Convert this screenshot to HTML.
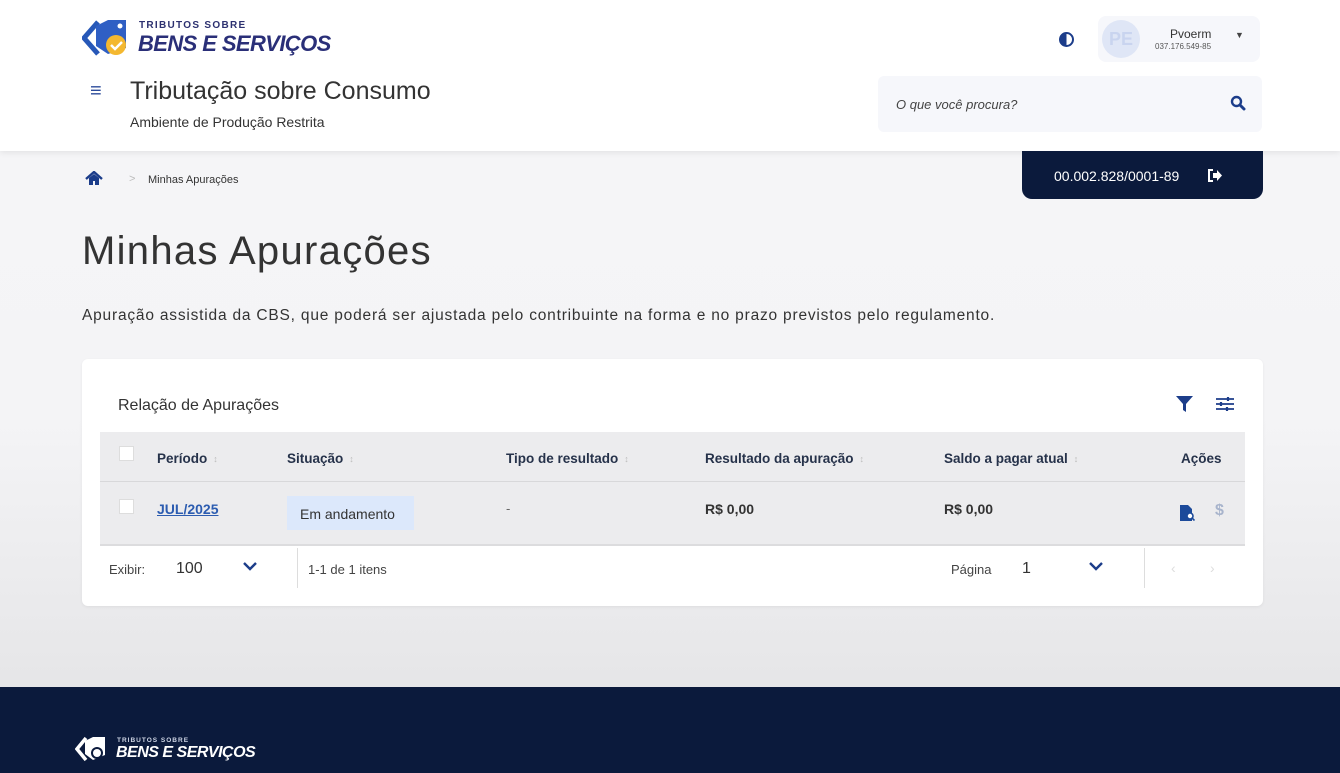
<!DOCTYPE html>
<html><head><meta charset="utf-8"><style>
*{margin:0;padding:0;box-sizing:border-box}
body{width:1340px;height:773px;overflow:hidden;font-family:"Liberation Sans",sans-serif;background:linear-gradient(#f6f6f8 0,#f4f4f6 420px,#e6e6e8 680px);position:relative;color:#222}
.a{position:absolute}
.hdr{left:0;top:0;width:1340px;height:151px;background:#fff;box-shadow:0 2px 6px rgba(0,0,0,.08)}
.foot{left:0;top:687px;width:1340px;height:86px;background:#0b1a3c}
.th{font-size:13.5px;font-weight:bold;color:#26324a;top:451px}
.sort{color:#bbb;font-size:9px;font-weight:normal;margin-left:6px;vertical-align:1px}
.cb{width:15px;height:15px;background:#fff;border:1px solid #ddd}
</style></head><body>
<div class="a hdr"></div>
<svg class="a" style="left:82px;top:18px" width="50" height="40" viewBox="0 0 50 40">
<path d="M16 4 L2 20 L16 36" fill="none" stroke="#2758b8" stroke-width="5" stroke-linejoin="round"/>
<path d="M14 8 L26 2 L44 2 L44 30 L26 36 L14 28 Z" fill="#2f5fc4"/>
<circle cx="38" cy="8" r="2.5" fill="#fff"/>
<circle cx="34" cy="27" r="10" fill="#f4b830"/>
<path d="M29 27 l4 4 l7 -7" fill="none" stroke="#fff" stroke-width="2.5"/>
</svg>
<div class="a" style="left:139px;top:20px;font-size:10px;font-weight:bold;letter-spacing:1.3px;color:#2d3170">TRIBUTOS SOBRE</div>
<div class="a" style="left:138px;top:31px;font-size:22px;font-weight:bold;font-style:italic;color:#2a2f78;letter-spacing:-.6px">BENS E SERVIÇOS</div>
<div class="a" style="left:90px;top:80px;font-size:20px;color:#2b4a9a">≡</div>
<div class="a" style="left:130px;top:77px;font-size:25px;color:#333">Tributação sobre Consumo</div>
<div class="a" style="left:130px;top:114px;font-size:14px;color:#333">Ambiente de Produção Restrita</div>
<div class="a" style="left:1059px;top:32px;width:15px;height:15px;border-radius:50%;border:2px solid #1c3d8a;background:linear-gradient(90deg,#1c3d8a 50%,#fff 50%)"></div>
<div class="a" style="left:1098px;top:16px;width:162px;height:46px;background:#f6f7fb;border-radius:8px"></div>
<div class="a" style="left:1102px;top:20px;width:38px;height:38px;border-radius:50%;background:#dfe6f6;color:#c9d4ef;font-size:18px;font-weight:bold;text-align:center;line-height:38px">PE</div>
<div class="a" style="left:1170px;top:27px;font-size:12px;color:#333">Pvoerm</div>
<div class="a" style="left:1155px;top:42px;font-size:8px;color:#555">037.176.549-85</div>
<div class="a" style="left:1235px;top:30px;font-size:9px;color:#444">▼</div>
<div class="a" style="left:878px;top:76px;width:384px;height:56px;background:#f6f7fb;border-radius:6px"></div>
<div class="a" style="left:896px;top:97px;font-size:13px;font-style:italic;color:#444">O que você procura?</div>
<svg class="a" style="left:1230px;top:95px" width="16" height="16" viewBox="0 0 16 16"><circle cx="6.5" cy="6.5" r="4.5" fill="none" stroke="#1c3d8a" stroke-width="2.4"/><path d="M10 10 L14 14" stroke="#1c3d8a" stroke-width="3" stroke-linecap="round"/></svg>
<div class="a" style="left:1022px;top:151px;width:241px;height:48px;background:#0b1a3c;border-radius:0 0 10px 10px"></div>
<div class="a" style="left:1054px;top:168px;font-size:14px;color:#fff">00.002.828/0001-89</div>
<svg class="a" style="left:1207px;top:169px" width="16" height="13" viewBox="0 0 16 13"><path d="M6 1 H2 V12 H6" fill="none" stroke="#fff" stroke-width="2"/><path d="M6 4 H10 V1 L15 6.5 L10 12 V9 H6 Z" fill="#fff"/></svg>
<svg class="a" style="left:85px;top:171px" width="18" height="15" viewBox="0 0 18 15"><path d="M1 8 L9 1 L17 8" fill="none" stroke="#1c3d8a" stroke-width="2.4"/><path d="M4 7 V14 H8 V10 H10 V14 H14 V7 L9 3 Z" fill="#1c3d8a"/></svg>
<div class="a" style="left:129px;top:173px;font-size:11px;color:#bbb">&gt;</div>
<div class="a" style="left:148px;top:174px;font-size:11px;color:#333">Minhas Apurações</div>
<div class="a" style="left:82px;top:229px;font-size:40px;color:#333;letter-spacing:1.3px">Minhas Apurações</div>
<div class="a" style="left:82px;top:307px;font-size:15.5px;color:#333;letter-spacing:.8px">Apuração assistida da CBS, que poderá ser ajustada pelo contribuinte na forma e no prazo previstos pelo regulamento.</div>
<div class="a" style="left:82px;top:359px;width:1181px;height:247px;background:#fff;border-radius:6px;box-shadow:0 1px 3px rgba(0,0,0,.06)"></div>
<div class="a" style="left:118px;top:397px;font-size:16px;color:#333">Relação de Apurações</div>
<svg class="a" style="left:1176px;top:396px" width="17" height="16" viewBox="0 0 17 16"><path d="M0 0 H17 L10 8 V16 L7 14 V8 Z" fill="#1c3d8a"/></svg>
<svg class="a" style="left:1216px;top:397px" width="18" height="14" viewBox="0 0 18 14" stroke="#1c3d8a" stroke-width="1.8"><path d="M0 2 H18 M0 7 H18 M0 12 H18"/><path d="M12 0 V4 M5 5 V9 M11 10 V14" stroke-width="2.2"/></svg>
<div class="a" style="left:100px;top:432px;width:1145px;height:113px;background:#ececee"></div>
<div class="a" style="left:100px;top:481px;width:1145px;height:1px;background:#d8d8da"></div>
<div class="a" style="left:100px;top:544px;width:1145px;height:2px;background:#dcdcde"></div>
<div class="a cb" style="left:119px;top:446px"></div>
<div class="a cb" style="left:119px;top:499px"></div>
<div class="a th" style="left:157px">Período<span class="sort">↕</span></div>
<div class="a th" style="left:287px">Situação<span class="sort">↕</span></div>
<div class="a th" style="left:506px">Tipo de resultado<span class="sort">↕</span></div>
<div class="a th" style="left:705px">Resultado da apuração<span class="sort">↕</span></div>
<div class="a th" style="left:944px">Saldo a pagar atual<span class="sort">↕</span></div>
<div class="a th" style="left:1181px">Ações</div>
<div class="a" style="left:157px;top:501px;font-size:14px;font-weight:bold;color:#2c5cb0;text-decoration:underline">JUL/2025</div>
<div class="a" style="left:287px;top:496px;width:127px;height:34px;background:#dce8fb"></div>
<div class="a" style="left:300px;top:506px;font-size:14px;color:#333">Em andamento</div>
<div class="a" style="left:506px;top:501px;font-size:13px;color:#666">-</div>
<div class="a" style="left:705px;top:501px;font-size:14px;font-weight:bold;color:#333">R$ 0,00</div>
<div class="a" style="left:944px;top:501px;font-size:14px;font-weight:bold;color:#333">R$ 0,00</div>
<svg class="a" style="left:1180px;top:505px" width="15" height="16" viewBox="0 0 15 16"><path d="M0 0 H8 L12 4 V16 H0 Z" fill="#1c4a9a"/><circle cx="10" cy="11" r="3" fill="#fff" stroke="#1c4a9a" stroke-width="1.6"/><path d="M12 13 L14.5 15.5" stroke="#1c4a9a" stroke-width="1.6"/></svg>
<div class="a" style="left:1215px;top:502px;font-size:16px;font-weight:bold;color:#a8b4cc">$</div>
<div class="a" style="left:109px;top:562px;font-size:13px;color:#444">Exibir:</div>
<div class="a" style="left:176px;top:560px;font-size:16px;color:#333">100</div>
<svg class="a" style="left:243px;top:562px" width="14" height="9" viewBox="0 0 14 9"><path d="M1 1 L7 7 L13 1" fill="none" stroke="#1c3d8a" stroke-width="2.4"/></svg>
<div class="a" style="left:297px;top:548px;width:1px;height:40px;background:#ddd"></div>
<div class="a" style="left:308px;top:562px;font-size:13px;color:#444">1-1 de 1 itens</div>
<div class="a" style="left:951px;top:562px;font-size:13px;color:#444">Página</div>
<div class="a" style="left:1022px;top:560px;font-size:16px;color:#333">1</div>
<svg class="a" style="left:1089px;top:562px" width="14" height="9" viewBox="0 0 14 9"><path d="M1 1 L7 7 L13 1" fill="none" stroke="#1c3d8a" stroke-width="2.4"/></svg>
<div class="a" style="left:1144px;top:548px;width:1px;height:40px;background:#ddd"></div>
<div class="a" style="left:1171px;top:560px;font-size:14px;color:#ddd">‹</div>
<div class="a" style="left:1210px;top:560px;font-size:14px;color:#ddd">›</div>
<div class="a foot"></div>
<svg class="a" style="left:75px;top:735px" width="34" height="28" viewBox="0 0 34 28"><path d="M11 3 L2 14 L11 25" fill="none" stroke="#fff" stroke-width="3.5"/><path d="M10 6 L18 2 L30 2 L30 20 L18 25 L10 19 Z" fill="#fff"/><circle cx="22" cy="18" r="6" fill="#0b1a3c"/><circle cx="22" cy="18" r="4" fill="#fff"/></svg>
<div class="a" style="left:117px;top:737px;font-size:6.5px;font-weight:bold;letter-spacing:1px;color:#cfd6e6">TRIBUTOS SOBRE</div>
<div class="a" style="left:116px;top:744px;font-size:16px;font-weight:bold;font-style:italic;color:#fff;letter-spacing:-.5px">BENS E SERVIÇOS</div>
</body></html>
